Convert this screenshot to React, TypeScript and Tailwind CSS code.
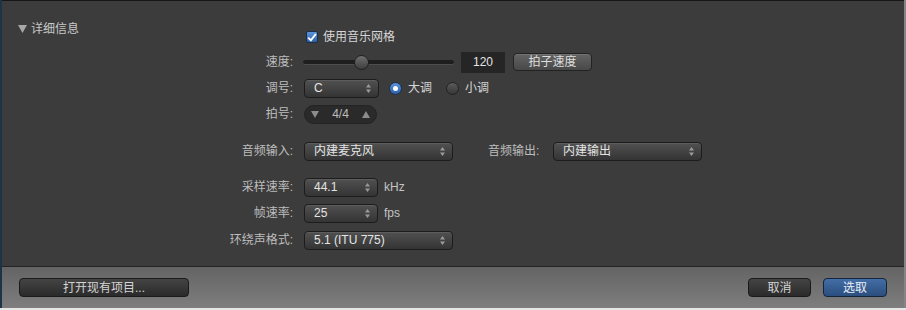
import type { ReactNode } from 'react';

const FONT = { fontFamily: '"Liberation Sans", "Noto Sans CJK SC", sans-serif' };

function Arrows() {
    return (
        <svg width="5" height="9" viewBox="0 0 5 9" className="shrink-0">
            <path d="M2.5 0 L5 3.4 L0 3.4 Z" fill="#9a9a9a" />
            <path d="M2.5 9 L5 5.6 L0 5.6 Z" fill="#9a9a9a" />
        </svg>
    );
}

function Select({ value, className }: { value: string; className: string }) {
    return (
        <div
            className={`flex h-[19px] items-center justify-between rounded-[4px] border border-[#1c1c1c] bg-gradient-to-b from-[#515151] to-[#343434] pl-[9px] pr-[7px] text-[12px] text-[#e4e4e4] shadow-[inset_0_1px_0_rgba(255,255,255,0.08)] ${className}`}
        >
            <span>{value}</span>
            <Arrows />
        </div>
    );
}

function Row({ label, className = '', children }: { label: string; className?: string; children: ReactNode }) {
    return (
        <div className={`flex h-[22px] items-center ${className}`}>
            <span className="w-[68px] text-right text-[12px] text-[#bdbdbd]">{label}</span>
            <div className="ml-[11px] flex items-center">{children}</div>
        </div>
    );
}

function Radio({ checked, label }: { checked: boolean; label: string }) {
    return (
        <div className="flex items-center gap-[6px]">
            {checked ? (
                <div className="flex h-[13px] w-[13px] items-center justify-center rounded-full border border-[#1b2f4c] bg-gradient-to-b from-[#5b95dc] to-[#2d5fa6]">
                    <div className="h-[5px] w-[5px] rounded-full bg-white" />
                </div>
            ) : (
                <div className="h-[13px] w-[13px] rounded-full border border-[#222] bg-gradient-to-b from-[#5a5a5a] to-[#373737]" />
            )}
            <span className="text-[12px] text-[#d6d6d6]">{label}</span>
        </div>
    );
}

export default function App() {
    return (
        <div className="flex h-[310px] w-[906px] flex-col bg-[#e6e6e6]" style={FONT}>
            <div className="flex flex-col border-l-2 border-r-2 border-l-[#1b344a] border-r-[#858585]">
                {/* Main panel */}
                <div className="flex h-[266px] border-t border-[#161616] bg-[#3c3c3c]">
                    <div className="w-[223px] pl-[16px] pt-[20px]">
                        <div className="flex h-[16px] items-center gap-[4px] text-[12px] text-[#c8c8c8]">
                            <svg width="9" height="8" viewBox="0 0 9 8">
                                <path d="M0 0 L9 0 L4.5 8 Z" fill="#a8a8a8" />
                            </svg>
                            <span>详细信息</span>
                        </div>
                    </div>

                    <div className="flex flex-col pt-[28px]">
                        <div className="ml-[81px] flex h-[16px] items-center gap-[5px]">
                            <div className="flex h-[12px] w-[12px] items-center justify-center rounded-[2px] border border-[#1b2f4c] bg-gradient-to-b from-[#5b95dc] to-[#2d5fa6]">
                                <svg width="10" height="9" viewBox="0 0 10 9">
                                    <path d="M1.2 4.6 L3.9 7.4 L8.8 1" fill="none" stroke="white" strokeWidth="1.9" />
                                </svg>
                            </div>
                            <span className="text-[12px] text-[#d6d6d6]">使用音乐网格</span>
                        </div>

                        <Row label="速度:" className="mt-[6px]">
                            <div className="relative -ml-[1px] h-[5px] w-[151px] rounded-full border-b border-[#4d4d4d] bg-[#1e1e1e]">
                                <div className="absolute -top-[5px] left-[51px] h-[15px] w-[15px] rounded-full border border-[#1f1f1f] bg-gradient-to-b from-[#707070] to-[#3e3e3e]" />
                            </div>
                            <div className="ml-[7px] flex h-[21px] w-[44px] items-center justify-center bg-[#252525] text-[12px] text-[#e4e4e4]">
                                120
                            </div>
                            <div className="ml-[8px] flex h-[18px] w-[79px] items-center justify-center rounded-[4px] border border-[#222] bg-gradient-to-b from-[#646464] to-[#484848] text-[12px] text-[#dedede] shadow-[inset_0_1px_0_rgba(255,255,255,0.1)]">
                                拍子速度
                            </div>
                        </Row>

                        <Row label="调号:" className="mt-[4px]">
                            <Select value="C" className="w-[75px]" />
                            <div className="ml-[10px] flex items-center gap-[14px]">
                                <Radio checked label="大调" />
                                <Radio checked={false} label="小调" />
                            </div>
                        </Row>

                        <Row label="拍号:" className="mt-[4px]">
                            <div className="flex h-[19px] w-[73px] items-center justify-between rounded-full border border-[#232323] bg-[#2a2a2a] px-[6px] text-[12px] text-[#bdbdbd]">
                                <svg width="8" height="7" viewBox="0 0 8 7">
                                    <path d="M0 0 L8 0 L4 7 Z" fill="#8c8c8c" />
                                </svg>
                                <span>4/4</span>
                                <svg width="8" height="7" viewBox="0 0 8 7">
                                    <path d="M0 7 L8 7 L4 0 Z" fill="#8c8c8c" />
                                </svg>
                            </div>
                        </Row>

                        <Row label="音频输入:" className="mt-[15px]">
                            <Select value="内建麦克风" className="w-[149px]" />
                            <span className="ml-[35px] w-[54px] text-[12px] text-[#bdbdbd]">音频输出:</span>
                            <Select value="内建输出" className="ml-[11px] w-[149px]" />
                        </Row>

                        <Row label="采样速率:" className="mt-[14px]">
                            <Select value="44.1" className="w-[74px]" />
                            <span className="ml-[6px] text-[12px] text-[#c4c4c4]">kHz</span>
                        </Row>

                        <Row label="帧速率:" className="mt-[4px]">
                            <Select value="25" className="w-[74px]" />
                            <span className="ml-[6px] text-[12px] text-[#c4c4c4]">fps</span>
                        </Row>

                        <Row label="环绕声格式:" className="mt-[5px]">
                            <Select value="5.1 (ITU 775)" className="w-[149px]" />
                        </Row>
                    </div>
                </div>

                {/* Footer */}
                <div className="flex h-[42px] items-center justify-between border-t border-[#232323] bg-gradient-to-b from-[#646464] to-[#7e7e7e] pl-[17px] pr-[17px]">
                    <div className="flex h-[19px] w-[170px] items-center justify-center rounded-[4px] border border-[#1a1a1a] bg-gradient-to-b from-[#444] to-[#2a2a2a] text-[12px] text-[#d4d4d4]">
                        打开现有项目...
                    </div>
                    <div className="flex gap-[12px]">
                        <div className="flex h-[19px] w-[63px] items-center justify-center rounded-[4px] border border-[#1a1a1a] bg-gradient-to-b from-[#444] to-[#2a2a2a] text-[12px] text-[#d4d4d4]">
                            取消
                        </div>
                        <div className="flex h-[19px] w-[64px] items-center justify-center rounded-[4px] border border-[#14243a] bg-gradient-to-b from-[#436ea6] to-[#2b4e7e] text-[12px] text-[#e8eef6]">
                            选取
                        </div>
                    </div>
                </div>
            </div>
        </div>
    );
}
